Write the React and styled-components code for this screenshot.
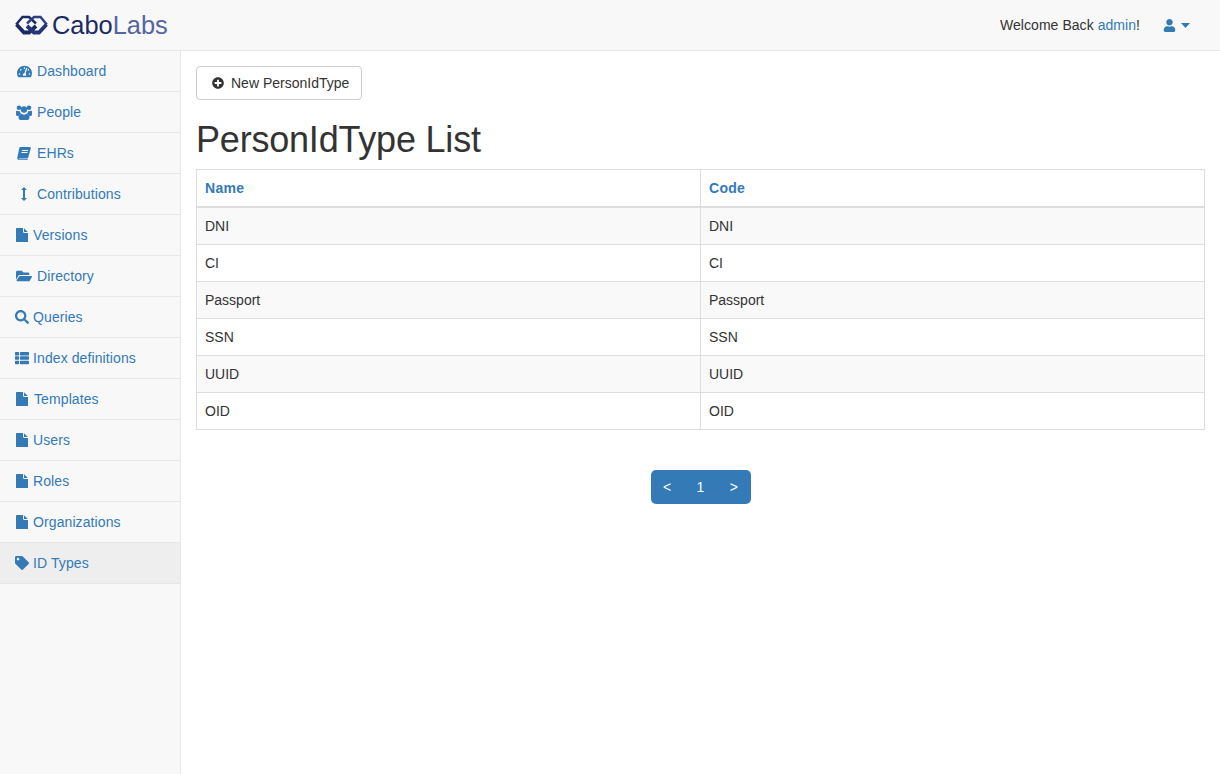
import React from "react";
import styled, { createGlobalStyle } from "styled-components";
import { FaTachometerAlt, FaFolderOpen, FaSearch, FaThList, FaTag, FaUser, FaPlusCircle } from "react-icons/fa";

const Global = createGlobalStyle`
  html, body { margin: 0; padding: 0; background: #fff; }
  body { font-family: "Liberation Sans", Arial, sans-serif; font-size: 14px; line-height: 20px; color: #333; }
  * { box-sizing: border-box; }
`;

const Page = styled.div`
  display: flex;
  flex-direction: column;
  min-height: 774px;
`;
const Navbar = styled.header`
  height: 51px;
  flex: none;
  background: #f8f8f8;
  border-bottom: 1px solid #e7e7e7;
  display: flex;
  align-items: center;
  justify-content: space-between;
  padding: 0 30px 0 15px;
`;
const Brand = styled.div`
  display: flex;
  align-items: center;
  gap: 4px;
`;
const BrandName = styled.span`
  font-size: 25.4px;
  line-height: 30px;
  color: #1b2a63;
`;
const BrandAccent = styled.span`
  color: #5565a0;
`;
const UserArea = styled.div`
  display: flex;
  align-items: center;
  gap: 23px;
  letter-spacing: 0.05px;
`;
const UserLink = styled.a`
  color: #337ab7;
  text-decoration: none;
`;
const UserMenu = styled.span`
  display: flex;
  align-items: center;
  gap: 5px;
  color: #337ab7;
`;
const Body = styled.div`
  display: flex;
  flex: 1;
`;
const Sidebar = styled.nav`
  width: 181px;
  flex: none;
  min-height: 723px;
  background: #f8f8f8;
  border-right: 1px solid #e7e7e7;
`;
const NavItem = styled.a`
  display: flex;
  align-items: center;
  height: 41px;
  padding-left: 15px;
  border-bottom: 1px solid #e7e7e7;
  color: #337ab7;
  text-decoration: none;
  letter-spacing: 0.1px;
  background: ${(p) => (p.$active ? "#eee" : "transparent")};
`;
const IconSlot = styled.span`
  display: inline-flex;
  justify-content: center;
  align-items: center;
  flex: none;
  width: ${(p) => p.$w}px;
  margin-right: ${(p) => p.$gap}px;
`;
const Main = styled.main`
  flex: 1;
  min-width: 0;
  padding: 15px 15px 0;
`;
const Button = styled.button`
  display: inline-flex;
  align-items: center;
  height: 34px;
  padding: 0 12px 0 15px;
  gap: 7px;
  background: #fff;
  border: 1px solid #ccc;
  border-radius: 4px;
  color: #333;
  font: inherit;
`;
const Title = styled.h1`
  margin: 20px 0 9px;
  font-size: 36px;
  line-height: 40px;
  font-weight: 500;
  color: #333;
  letter-spacing: -0.2px;
`;
const Table = styled.table`
  width: 100%;
  border-collapse: collapse;
  table-layout: fixed;
  border: 1px solid #ddd;
`;
const Th = styled.th`
  text-align: left;
  padding: 8px;
  line-height: 20px;
  border: 1px solid #ddd;
  border-bottom: 2px solid #ddd;
  color: #337ab7;
  font-weight: 700;
  letter-spacing: 0.3px;
`;
const Td = styled.td`
  padding: 8px;
  line-height: 20px;
  border: 1px solid #ddd;
`;
const Row = styled.tr`
  background: ${(p) => (p.$odd ? "#f9f9f9" : "#fff")};
`;
const PagerWrap = styled.div`
  display: flex;
  justify-content: center;
  margin-top: 40px;
`;
const Pager = styled.div`
  display: flex;
  width: 100px;
  height: 34px;
  border-radius: 5px;
  background: #337ab7;
  color: #fff;
`;
const PageCell = styled.span`
  flex: 1;
  display: flex;
  align-items: center;
  justify-content: center;
`;

const c = "#337ab7";
const FileIcon = () => (
  <svg width="12" height="14" viewBox="0 0 12 14">
    <path d="M0 .6C0 .3.3 0 .6 0H7v3.800C7 4.400 7.500 5 8.200 5H12v8.400c0 .3-.3.6-.6.6H.6c-.3 0-.6-.3-.6-.6z" fill={c} />
    <path d="M8 .2L11.800 4H8z" fill={c} />
  </svg>
);
const ResizeIcon = () => (
  <svg width="8" height="14" viewBox="0 0 8 14">
    <path d="M4 0L7 3H5V11H7L4 14L1 11H3V3H1Z" fill={c} />
  </svg>
);
const PeopleIcon = () => (
  <svg width="16" height="15" viewBox="0 0 16 15" fill={c}>
    <circle cx="3" cy="2.800" r="2.300" />
    <circle cx="13" cy="2.800" r="2.300" />
    <circle cx="8" cy="4.500" r="3.200" />
    <path d="M0 6.500C0 5.800.5 5.500 1 5.800 2 6.300 3 6.300 4 6 4 7.500 4.500 8.400 5.200 9 3.800 9.300 3 10 2.500 11 .8 11 0 10.500 0 9.500z" />
    <path d="M16 6.500C16 5.800 15.500 5.500 15 5.800 14 6.300 13 6.300 12 6 12 7.500 11.500 8.400 10.800 9 12.200 9.300 13 10 13.500 11 15.200 11 16 10.500 16 9.500z" />
    <path d="M5 8.800C6.500 9.900 9.500 9.900 11 8.800 12.800 9 13.500 10.500 13.500 12.500 13.500 14 12.700 15 11.500 15H4.500C3.300 15 2.500 14 2.500 12.500 2.500 10.500 3.200 9 5 8.800z" />
  </svg>
);
const BookIcon = () => (
  <svg width="14" height="13" viewBox="0 0 14 13">
    <path d="M3.300 0H12.800C13.600 0 14 .7 13.700 1.400L11.300 10.300C11.100 11 10.700 11.400 9.800 11.400H2.200C1.700 11.400 1.500 11.700 1.700 12 1.800 12.200 2 12.300 2.400 12.300H11L10.800 13H2C.8 13 0 12 .3 10.800L2.300 1C2.400.4 2.800 0 3.300 0z" fill={c} />
    <path d="M5 3H11V3.900H4.800zM4.500 5H10.500V5.900H4.300z" fill="#f8f8f8" />
  </svg>
);
const Caret = () => (
  <svg width="9" height="5" viewBox="0 0 9 5">
    <path d="M0 0H9L4.500 5Z" fill={c} />
  </svg>
);
const Logo = () => (
  <svg width="33" height="20" viewBox="0 0 33 20">
    <g fill="none" strokeLinejoin="miter">
      <path d="M1.200 9.500L7.500 2H14L21 8.500" stroke="#1b2a63" strokeWidth="2.400" />
      <path d="M31.800 9.500L25.500 2H19L12 8.500" stroke="#2f3f85" strokeWidth="2.400" />
      <path d="M1.500 9.500L9 17.500H14L21 11" stroke="#1b2a63" strokeWidth="3.800" />
      <path d="M31.500 9.500L24 17.500H19L12 11" stroke="#24337a" strokeWidth="3.800" />
    </g>
  </svg>
);

const items = [
  ["Dashboard", <FaTachometerAlt size={15} color={c} />, 18, 4],
  ["People", <PeopleIcon />, 18, 4],
  ["EHRs", <BookIcon />, 18, 4],
  ["Contributions", <ResizeIcon />, 18, 4],
  ["Versions", <FileIcon />, 14, 4],
  ["Directory", <FaFolderOpen size={16} color={c} />, 18, 4],
  ["Queries", <FaSearch size={14} color={c} />, 14, 4],
  ["Index definitions", <FaThList size={14} color={c} />, 14, 4],
  ["Templates", <FileIcon />, 14, 5],
  ["Users", <FileIcon />, 14, 4],
  ["Roles", <FileIcon />, 14, 4],
  ["Organizations", <FileIcon />, 14, 4],
  ["ID Types", <FaTag size={14} color={c} />, 14, 4],
];
const rows = ["DNI", "CI", "Passport", "SSN", "UUID", "OID"];

export default function App() {
  return (
    <Page>
      <Global />
      <Navbar>
        <Brand>
          <Logo />
          <BrandName>Cabo<BrandAccent>Labs</BrandAccent></BrandName>
        </Brand>
        <UserArea>
          <span>Welcome Back <UserLink href="#">admin</UserLink>!</span>
          <UserMenu><FaUser size={13} /><Caret /></UserMenu>
        </UserArea>
      </Navbar>
      <Body>
        <Sidebar>
          {items.map(([label, icon, w, gap]) => (
            <NavItem key={label} href="#" $active={label === "ID Types"}>
              <IconSlot $w={w} $gap={gap}>{icon}</IconSlot>
              {label}
            </NavItem>
          ))}
        </Sidebar>
        <Main>
          <Button><FaPlusCircle size={12} /> New PersonIdType</Button>
          <Title>PersonIdType List</Title>
          <Table>
            <thead>
              <tr><Th>Name</Th><Th>Code</Th></tr>
            </thead>
            <tbody>
              {rows.map((r, i) => (
                <Row key={r} $odd={i % 2 === 0}><Td>{r}</Td><Td>{r}</Td></Row>
              ))}
            </tbody>
          </Table>
          <PagerWrap>
            <Pager>
              <PageCell>&lt;</PageCell>
              <PageCell>1</PageCell>
              <PageCell>&gt;</PageCell>
            </Pager>
          </PagerWrap>
        </Main>
      </Body>
    </Page>
  );
}
